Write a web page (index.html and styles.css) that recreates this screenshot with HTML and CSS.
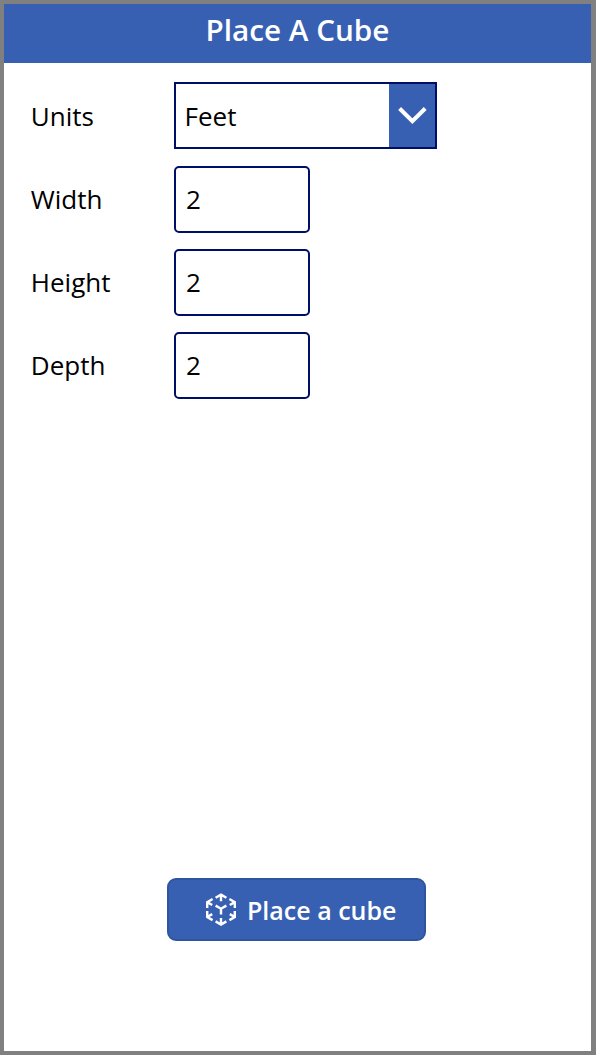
FILE: index.html
```html
<!DOCTYPE html>
<html lang="en">
<head>
<meta charset="utf-8">
<title>Place A Cube</title>
<link rel="stylesheet" href="styles.css">
</head>
<body>
<main class="screen">
  <header class="header"><h1 class="title">Place A Cube</h1></header>
  <form class="form">
    <div class="row row-units">
      <span class="label">Units</span>
      <div class="select">
        <span class="select-value">Feet</span>
        <span class="select-toggle">
          <svg width="30" height="20" viewBox="0 0 30 20" fill="none" stroke="#fff" stroke-width="4"><path d="M2.6 3.5 15.4 16.2 28.2 3.5"/></svg>
        </span>
      </div>
    </div>
    <div class="row row-size"><span class="label">Width</span><div class="field">2</div></div>
    <div class="row row-size"><span class="label">Height</span><div class="field">2</div></div>
    <div class="row row-size"><span class="label">Depth</span><div class="field">2</div></div>
  </form>
  <button class="place" type="button">
    <svg class="cube" width="32" height="34" viewBox="0 0 32 34" fill="none" stroke="#fff" stroke-width="2.4">
      <path d="M10.6 4.7 16 1.6 21.4 4.7M16 1.8V8.2"/>
      <path d="M10.6 28.4 16 31.5 21.4 28.4M16 31.3v-6.2"/>
      <path d="M7.6 6 2.2 9.1V15M2.2 9.1 7.2 12"/>
      <path d="M24.4 6 29.8 9.1V15M29.8 9.1 24.8 12"/>
      <path d="M7.6 27.1 2.2 24V18.1M2.2 24 7.2 21.1"/>
      <path d="M24.4 27.1 29.8 24V18.1M29.8 24 24.8 21.1"/>
      <path d="M10.6 12.6 16 15.7 21.4 12.6M16 15.7v5.8"/>
    </svg>
    <span>Place a cube</span>
  </button>
</main>
</body>
</html>
```
FILE: styles.css
```css
* { box-sizing: border-box; }
body { margin: 0; font-family: "Open Sans", sans-serif; color: #000; }
.screen {
  height: 1055px;
  border: 4px solid #808080;
  border-right-width: 5px;
  background: #fff;
  display: flex;
  flex-direction: column;
}
.header {
  height: 58.7px;
  flex: none;
  background: #3860b2;
  color: #fff;
  text-align: center;
}
.title { margin: 0; font-size: 29.7px; font-weight: 600; line-height: 51px; }
.form {
  padding: 19.3px 0 0 26.8px;
  display: flex;
  flex-direction: column;
  gap: 16px;
}
.row { display: flex; align-items: center; height: 67px; }
.row-units { margin-bottom: 1px; }
.label { width: 143.2px; padding-top: 2px; font-size: 26px; line-height: 36px; }
.row-size .label { padding-top: 0; }
.select {
  width: 263px;
  height: 67px;
  border: 2px solid #000f66;
  display: flex;
  align-items: center;
}
.select-value { flex: 1; padding: 2px 0 0 8.6px; font-size: 26px; }
.select-toggle {
  width: 46px;
  align-self: stretch;
  background: #3860b2;
  display: flex;
  align-items: center;
  justify-content: center;
}
.field {
  width: 136px;
  height: 67px;
  border: 2px solid #000f66;
  border-radius: 5px;
  padding-left: 10px;
  font-size: 26px;
  line-height: 63px;
}
.place {
  width: 259px;
  height: 63px;
  margin: auto auto 110px 163px;
  padding: 0 0 0 36px;
  border: 2px solid #3055a0;
  border-radius: 9px;
  background: #3860b2;
  color: #fff;
  font: 600 25px/36px "Open Sans", sans-serif;
  display: flex;
  align-items: center;
  gap: 10px;
}
```
